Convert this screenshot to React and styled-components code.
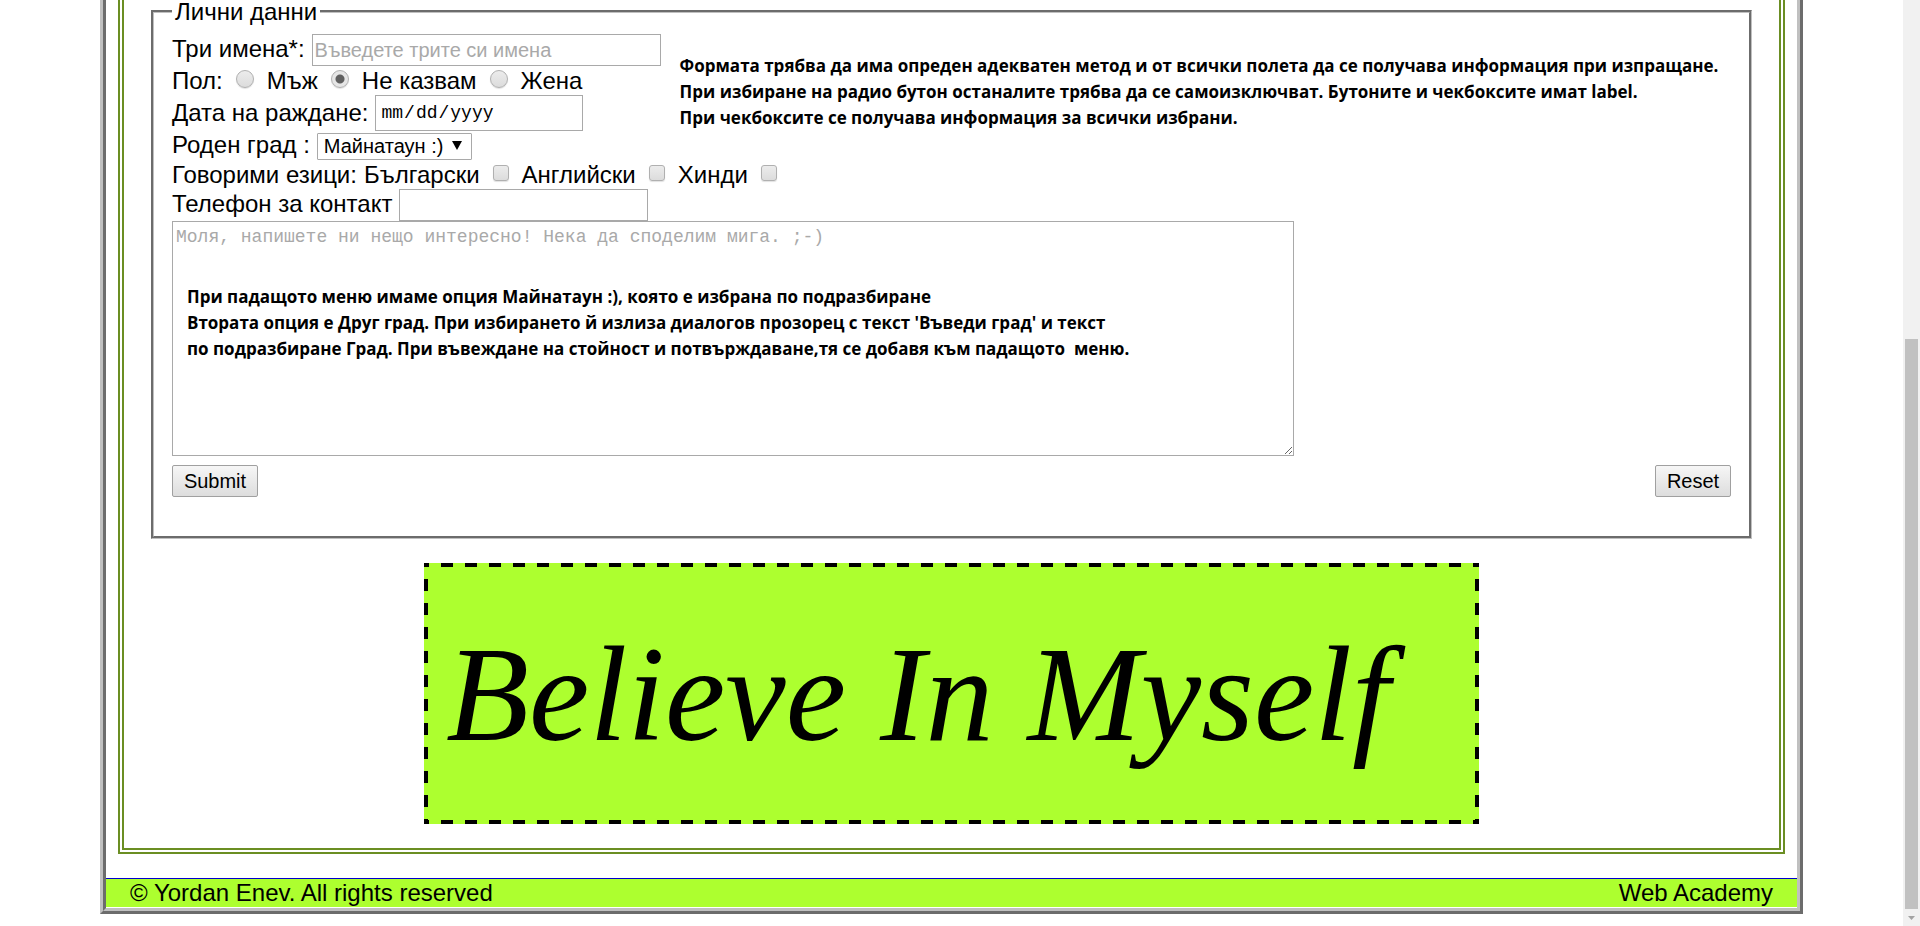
import React from "react";
import styled, { createGlobalStyle } from "styled-components";

const GlobalStyle = createGlobalStyle`
  *, *::before, *::after { box-sizing: border-box; }
  body {
    margin: 0;
    background: #fff;
    color: #000;
    font-family: "Liberation Sans", Arial, sans-serif;
    font-size: 24px;
    line-height: 28px;
  }
`;

const Screen = styled.div`
  display: grid;
  grid-template-columns: minmax(0, 1fr) 17px;
  min-height: 100vh;
`;

const Page = styled.div`
  margin: 0 100px 12px;
  border: 6px ridge #c0c0c0;
  border-top: 0;
`;

const Content = styled.main`
  margin: 0 12px 24px;
  padding: 0 27px 24px;
  border: 6px double #6b8e23;
  border-top: 0;
`;

const Fieldset = styled.fieldset`
  margin: 0 0 24px;
  padding: 11px 18px 39px;
  min-width: 0;
  border: 3px groove #c0c0c0;
`;

const Legend = styled.legend`
  padding: 0 3px;
  line-height: 23px;
`;

const TopGroup = styled.div`
  display: flex;
  gap: 19px;
`;

const Row = styled.div`
  display: flex;
  align-items: ${(p) => p.$align || "baseline"};
  gap: ${(p) => p.$gap || 7}px;
  height: ${(p) => p.$height}px;
  white-space: nowrap;
`;

const TextInput = styled.input`
  width: ${(p) => p.$width}px;
  height: ${(p) => p.$height || 32}px;
  padding: 1px 2px;
  border: 1px solid #a9a9a9;
  border-radius: 0;
  background: #fff;
  color: #000;
  font: 20px "Liberation Sans", Arial, sans-serif;
  &::placeholder { color: #a9a9a9; opacity: 1; }
`;

const DateInput = styled(TextInput)`
  padding: 1px 4px;
  font: 18px "Liberation Mono", monospace;
  &::-webkit-calendar-picker-indicator { display: none; }
`;

const SelectWrap = styled.span`
  position: relative;
  display: inline-block;
`;

const Select = styled.select`
  appearance: none;
  width: 155px;
  height: 27px;
  padding: 0 24px 0 6px;
  border: 1px solid #a9a9a9;
  border-radius: 1px;
  background: #fff;
  color: #000;
  font: 20px "Liberation Sans", Arial, sans-serif;
`;

const Arrow = styled.svg`
  position: absolute;
  right: 10px;
  top: 10px;
  pointer-events: none;
`;

const Tick = styled.input`
  appearance: none;
  flex: none;
  width: ${(p) => (p.type === "radio" ? 18 : 16)}px;
  height: ${(p) => (p.type === "radio" ? 18 : 16)}px;
  margin: 0 0 3px;
  border: 1px solid #b0b0b0;
  border-radius: ${(p) => (p.type === "radio" ? "50%" : "3px")};
  background: linear-gradient(#ececec, #dcdcdc);
  box-shadow: 0 1px 1px rgba(0, 0, 0, 0.12);
  &:checked {
    background: radial-gradient(circle, #606060 4px, #e6e6e6 5px);
  }
`;

const MessageBox = styled.div`
  position: relative;
  margin-bottom: 9px;
`;

const TextArea = styled.textarea`
  display: block;
  width: 1122px;
  max-width: 100%;
  height: 235px;
  padding: 3px;
  border: 1px solid #a9a9a9;
  background: #fff;
  font: 18px/24px "Liberation Mono", monospace;
  &::placeholder { color: #a9a9a9; opacity: 1; }
`;

const Note = styled.p`
  margin: 0;
  padding-top: 19px;
  font: bold 17px/26px "Open Sans", "Noto Sans", sans-serif;
  white-space: pre;
`;

const OverlayNote = styled(Note)`
  position: absolute;
  left: 15px;
  top: 63px;
  padding: 0;
  pointer-events: none;
`;

const Buttons = styled.div`
  display: flex;
  justify-content: space-between;
`;

const Button = styled.button`
  width: ${(p) => p.$width}px;
  height: 32px;
  padding: 0;
  border: 1px solid #a0a0a0;
  border-radius: 2px;
  background: linear-gradient(#f6f6f6, #dddddd);
  color: #000;
  font: 20px "Liberation Sans", Arial, sans-serif;
`;

/* Long 12px dashes around the banner, painted as one gradient strip per side. */
const dashesX = "repeating-linear-gradient(90deg, #000 0 5px, transparent 5px 17px, #000 17px 24px)";
const dashesY = "repeating-linear-gradient(180deg, #000 0 4px, transparent 4px 16px, #000 16px 24px)";

const Banner = styled.section`
  display: flex;
  align-items: center;
  max-width: 1055px;
  height: 261px;
  margin: 0 auto;
  padding-left: 22px;
  background:
    ${dashesX} top / 100% 4px no-repeat,
    ${dashesX} bottom / 100% 4px no-repeat,
    ${dashesY} left / 4px 100% no-repeat,
    ${dashesY} right / 4px 100% no-repeat,
    #adff2f;
`;

const Motto = styled.h2`
  margin: 0;
  font: italic 400 136px/140px "Liberation Serif", "Times New Roman", serif;
  white-space: nowrap;
`;

const Footer = styled.footer`
  display: flex;
  justify-content: space-between;
  padding: 0 24px;
  border-top: 1px solid #0000cd;
  background: #adff2f;
`;

const ScrollTrack = styled.div`
  display: flex;
  flex-direction: column;
  padding: 0 2px;
  background: #f1f1f1;
`;

const TrackSpace = styled.div`
  flex: 339;
`;

const Thumb = styled.div`
  flex: 570;
  background: #c1c1c1;
`;

const TrackEnd = styled.div`
  display: flex;
  align-items: center;
  justify-content: center;
  height: 17px;
`;

const languages = [
  ["bg", "Български"],
  ["en", "Английски"],
  ["hi", "Хинди"],
];

const genders = [
  ["male", "Мъж"],
  ["unsaid", "Не казвам"],
  ["female", "Жена"],
];

export default function App() {
  return (
    <Screen>
      <GlobalStyle />
      <Page>
        <Content>
          <form method="post" onSubmit={(e) => e.preventDefault()}>
            <Fieldset>
              <Legend>Лични данни</Legend>
              <TopGroup>
                <div>
                  <Row $height={32}>
                    <label htmlFor="names">Три имена*:</label>
                    <TextInput id="names" name="names" $width={349} placeholder="Въведете трите си имена" />
                  </Row>
                  <Row $height={29} $gap={13} $align="center">
                    <span>Пол:</span>
                    {genders.map(([value, text]) => (
                      <React.Fragment key={value}>
                        <Tick type="radio" id={value} name="gender" value={value} defaultChecked={value === "unsaid"} />
                        <label htmlFor={value}>{text}</label>
                      </React.Fragment>
                    ))}
                  </Row>
                  <Row $height={36} $align="center">
                    <label htmlFor="birth">Дата на раждане:</label>
                    <DateInput type="date" id="birth" name="birth" $width={208} $height={36} />
                  </Row>
                </div>
                <Note>
                  {"Формата трябва да има опреден адекватен метод и от всички полета да се получава информация при изпращане.\n"}
                  {"При избиране на радио бутон останалите трябва да се самоизключват. Бутоните и чекбоксите имат label.\n"}
                  {"При чекбоксите се получава информация за всички избрани."}
                </Note>
              </TopGroup>
              <Row $height={29}>
                <label htmlFor="city">Роден град :</label>
                <SelectWrap>
                  <Select id="city" name="city">
                    <option>Майнатаун :)</option>
                    <option>Друг град</option>
                  </Select>
                  <Arrow width="10" height="9" viewBox="0 0 10 9" aria-hidden="true">
                    <path d="M0 0h10L5 9z" />
                  </Arrow>
                </SelectWrap>
              </Row>
              <Row $height={29} $align="center">
                <span>Говорими езици:</span>
                <Row $height={29} $gap={13} $align="center">
                  {languages.map(([value, text]) => (
                    <React.Fragment key={value}>
                      <label htmlFor={value}>{text}</label>
                      <Tick type="checkbox" id={value} name="languages" value={value} />
                    </React.Fragment>
                  ))}
                </Row>
              </Row>
              <Row $height={32}>
                <label htmlFor="phone">Телефон за контакт</label>
                <TextInput type="tel" id="phone" name="phone" $width={249} />
              </Row>
              <MessageBox>
                <TextArea
                  name="message"
                  aria-label="Съобщение"
                  placeholder="Моля, напишете ни нещо интересно! Нека да споделим мига. ;-)"
                />
                <OverlayNote>
                  {"При падащото меню имаме опция Майнатаун :), която е избрана по подразбиране\n"}
                  {"Втората опция е Друг град. При избирането й излиза диалогов прозорец с текст 'Въведи град' и текст\n"}
                  {"по подразбиране Град. При въвеждане на стойност и потвърждаване,тя се добавя към падащото  меню."}
                </OverlayNote>
              </MessageBox>
              <Buttons>
                <Button type="submit" $width={86}>Submit</Button>
                <Button type="reset" $width={76}>Reset</Button>
              </Buttons>
            </Fieldset>
          </form>
          <Banner>
            <Motto>Believe In Myself</Motto>
          </Banner>
        </Content>
        <Footer>
          <span>© Yordan Enev. All rights reserved</span>
          <span>Web Academy</span>
        </Footer>
      </Page>
      <ScrollTrack aria-hidden="true">
        <TrackSpace />
        <Thumb />
        <TrackEnd>
          <svg width="7" height="4" viewBox="0 0 7 4">
            <path d="M0 0h7L3.500 4z" fill="#a3a3a3" />
          </svg>
        </TrackEnd>
      </ScrollTrack>
    </Screen>
  );
}
